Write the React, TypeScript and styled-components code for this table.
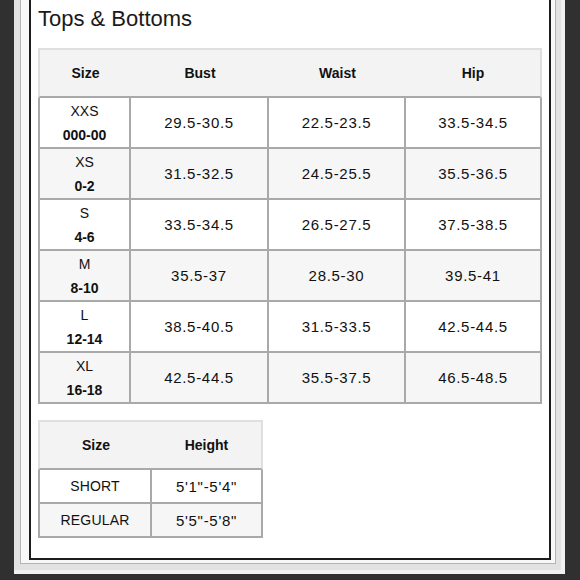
import React from 'react';
import styled, { createGlobalStyle } from 'styled-components';

const GlobalStyle = createGlobalStyle`
  html, body {
    margin: 0;
    padding: 0;
    background: #303030;
  }
  body {
    font-family: 'Liberation Sans', Arial, sans-serif;
    color: #111;
  }
`;

const Page = styled.div`
  width: 580px;
  height: 580px;
  box-sizing: border-box;
  padding: 0 15px 0 14px;
  background: #303030;
  overflow: hidden;
`;

const Frame = styled.div`
  background: #e2e2e2;
  padding: 0 5px 6px 6px;
  border-right: 4px solid #f1f1f1;
  border-bottom: 4px solid #f1f1f1;
`;

const Inset = styled.div`
  background: #f8f8f8;
  border: 1px solid #b4b4b4;
  border-top: none;
  padding: 0 4px 3px 8px;
`;

const Panel = styled.div`
  background: #fff;
  border: 2px solid #1c1c1c;
  border-top: none;
  padding: 7px 7px 20px 7px;
`;

const Title = styled.h2`
  margin: 0 0 17px 0;
  font-size: 22px;
  line-height: 24px;
  font-weight: normal;
  color: #1a1a1a;
`;

const SizeTable = styled.table<{ $width: number; $gap?: number }>`
  width: ${(p) => p.$width}px;
  table-layout: fixed;
  border-collapse: separate;
  border-spacing: 0;
  margin-top: ${(p) => p.$gap ?? 0}px;
  text-align: center;
`;

const HeadRow = styled.tr<{ $h: number }>`
  height: ${(p) => p.$h}px;
  background: #f3f3f3;
`;

const HeadCell = styled.th<{ $w: number }>`
  box-sizing: border-box;
  width: ${(p) => p.$w}px;
  padding: 0;
  font-size: 14px;
  font-weight: bold;
  border-top: 2px solid #dfdfdf;
  border-bottom: 2px solid #a9a9a9;

  &:first-child {
    border-left: 2px solid #dfdfdf;
  }
  &:last-child {
    border-right: 2px solid #dfdfdf;
  }
`;

const Row = styled.tr<{ $h: number; $alt: boolean }>`
  height: ${(p) => p.$h}px;
  background: ${(p) => (p.$alt ? '#f6f6f6' : '#fff')};
`;

const Cell = styled.td`
  box-sizing: border-box;
  padding: 0;
  font-size: 15px;
  letter-spacing: 0.7px;
  border-right: 2px solid #a9a9a9;
  border-bottom: 2px solid #a9a9a9;

  &:first-child {
    border-left: 2px solid #a9a9a9;
  }
`;

const SizeCell = styled(Cell)`
  font-size: 14px;
  letter-spacing: 0;
  line-height: 24px;
`;

const Label = styled.div`
  font-weight: normal;
`;

const Numeric = styled.div`
  font-weight: bold;
`;

const WordCell = styled(Cell)`
  font-size: 14px;
  letter-spacing: 0.2px;
`;

const sizes = [
  { label: 'XXS', num: '000-00', bust: '29.5-30.5', waist: '22.5-23.5', hip: '33.5-34.5' },
  { label: 'XS', num: '0-2', bust: '31.5-32.5', waist: '24.5-25.5', hip: '35.5-36.5' },
  { label: 'S', num: '4-6', bust: '33.5-34.5', waist: '26.5-27.5', hip: '37.5-38.5' },
  { label: 'M', num: '8-10', bust: '35.5-37', waist: '28.5-30', hip: '39.5-41' },
  { label: 'L', num: '12-14', bust: '38.5-40.5', waist: '31.5-33.5', hip: '42.5-44.5' },
  { label: 'XL', num: '16-18', bust: '42.5-44.5', waist: '35.5-37.5', hip: '46.5-48.5' },
];

const lengths = [
  { name: 'SHORT', height: '5\'1"-5\'4"' },
  { name: 'REGULAR', height: '5\'5"-5\'8"' },
];

const App: React.FC = () => {
  return (
    <>
      <GlobalStyle />
      <Page>
        <Frame>
          <Inset>
            <Panel>
              <Title>Tops &amp; Bottoms</Title>

              <SizeTable $width={504}>
                <thead>
                  <HeadRow $h={50}>
                    <HeadCell $w={93}>Size</HeadCell>
                    <HeadCell $w={138}>Bust</HeadCell>
                    <HeadCell $w={137}>Waist</HeadCell>
                    <HeadCell $w={136}>Hip</HeadCell>
                  </HeadRow>
                </thead>
                <tbody>
                  {sizes.map((s, i) => (
                    <Row key={s.label} $h={51} $alt={i % 2 === 1}>
                      <SizeCell>
                        <Label>{s.label}</Label>
                        <Numeric>{s.num}</Numeric>
                      </SizeCell>
                      <Cell>{s.bust}</Cell>
                      <Cell>{s.waist}</Cell>
                      <Cell>{s.hip}</Cell>
                    </Row>
                  ))}
                </tbody>
              </SizeTable>

              <SizeTable $width={225} $gap={16}>
                <thead>
                  <HeadRow $h={50}>
                    <HeadCell $w={114}>Size</HeadCell>
                    <HeadCell $w={111}>Height</HeadCell>
                  </HeadRow>
                </thead>
                <tbody>
                  {lengths.map((l, i) => (
                    <Row key={l.name} $h={34} $alt={i % 2 === 1}>
                      <WordCell>{l.name}</WordCell>
                      <Cell>{l.height}</Cell>
                    </Row>
                  ))}
                </tbody>
              </SizeTable>
            </Panel>
          </Inset>
        </Frame>
      </Page>
    </>
  );
};

export default App;
